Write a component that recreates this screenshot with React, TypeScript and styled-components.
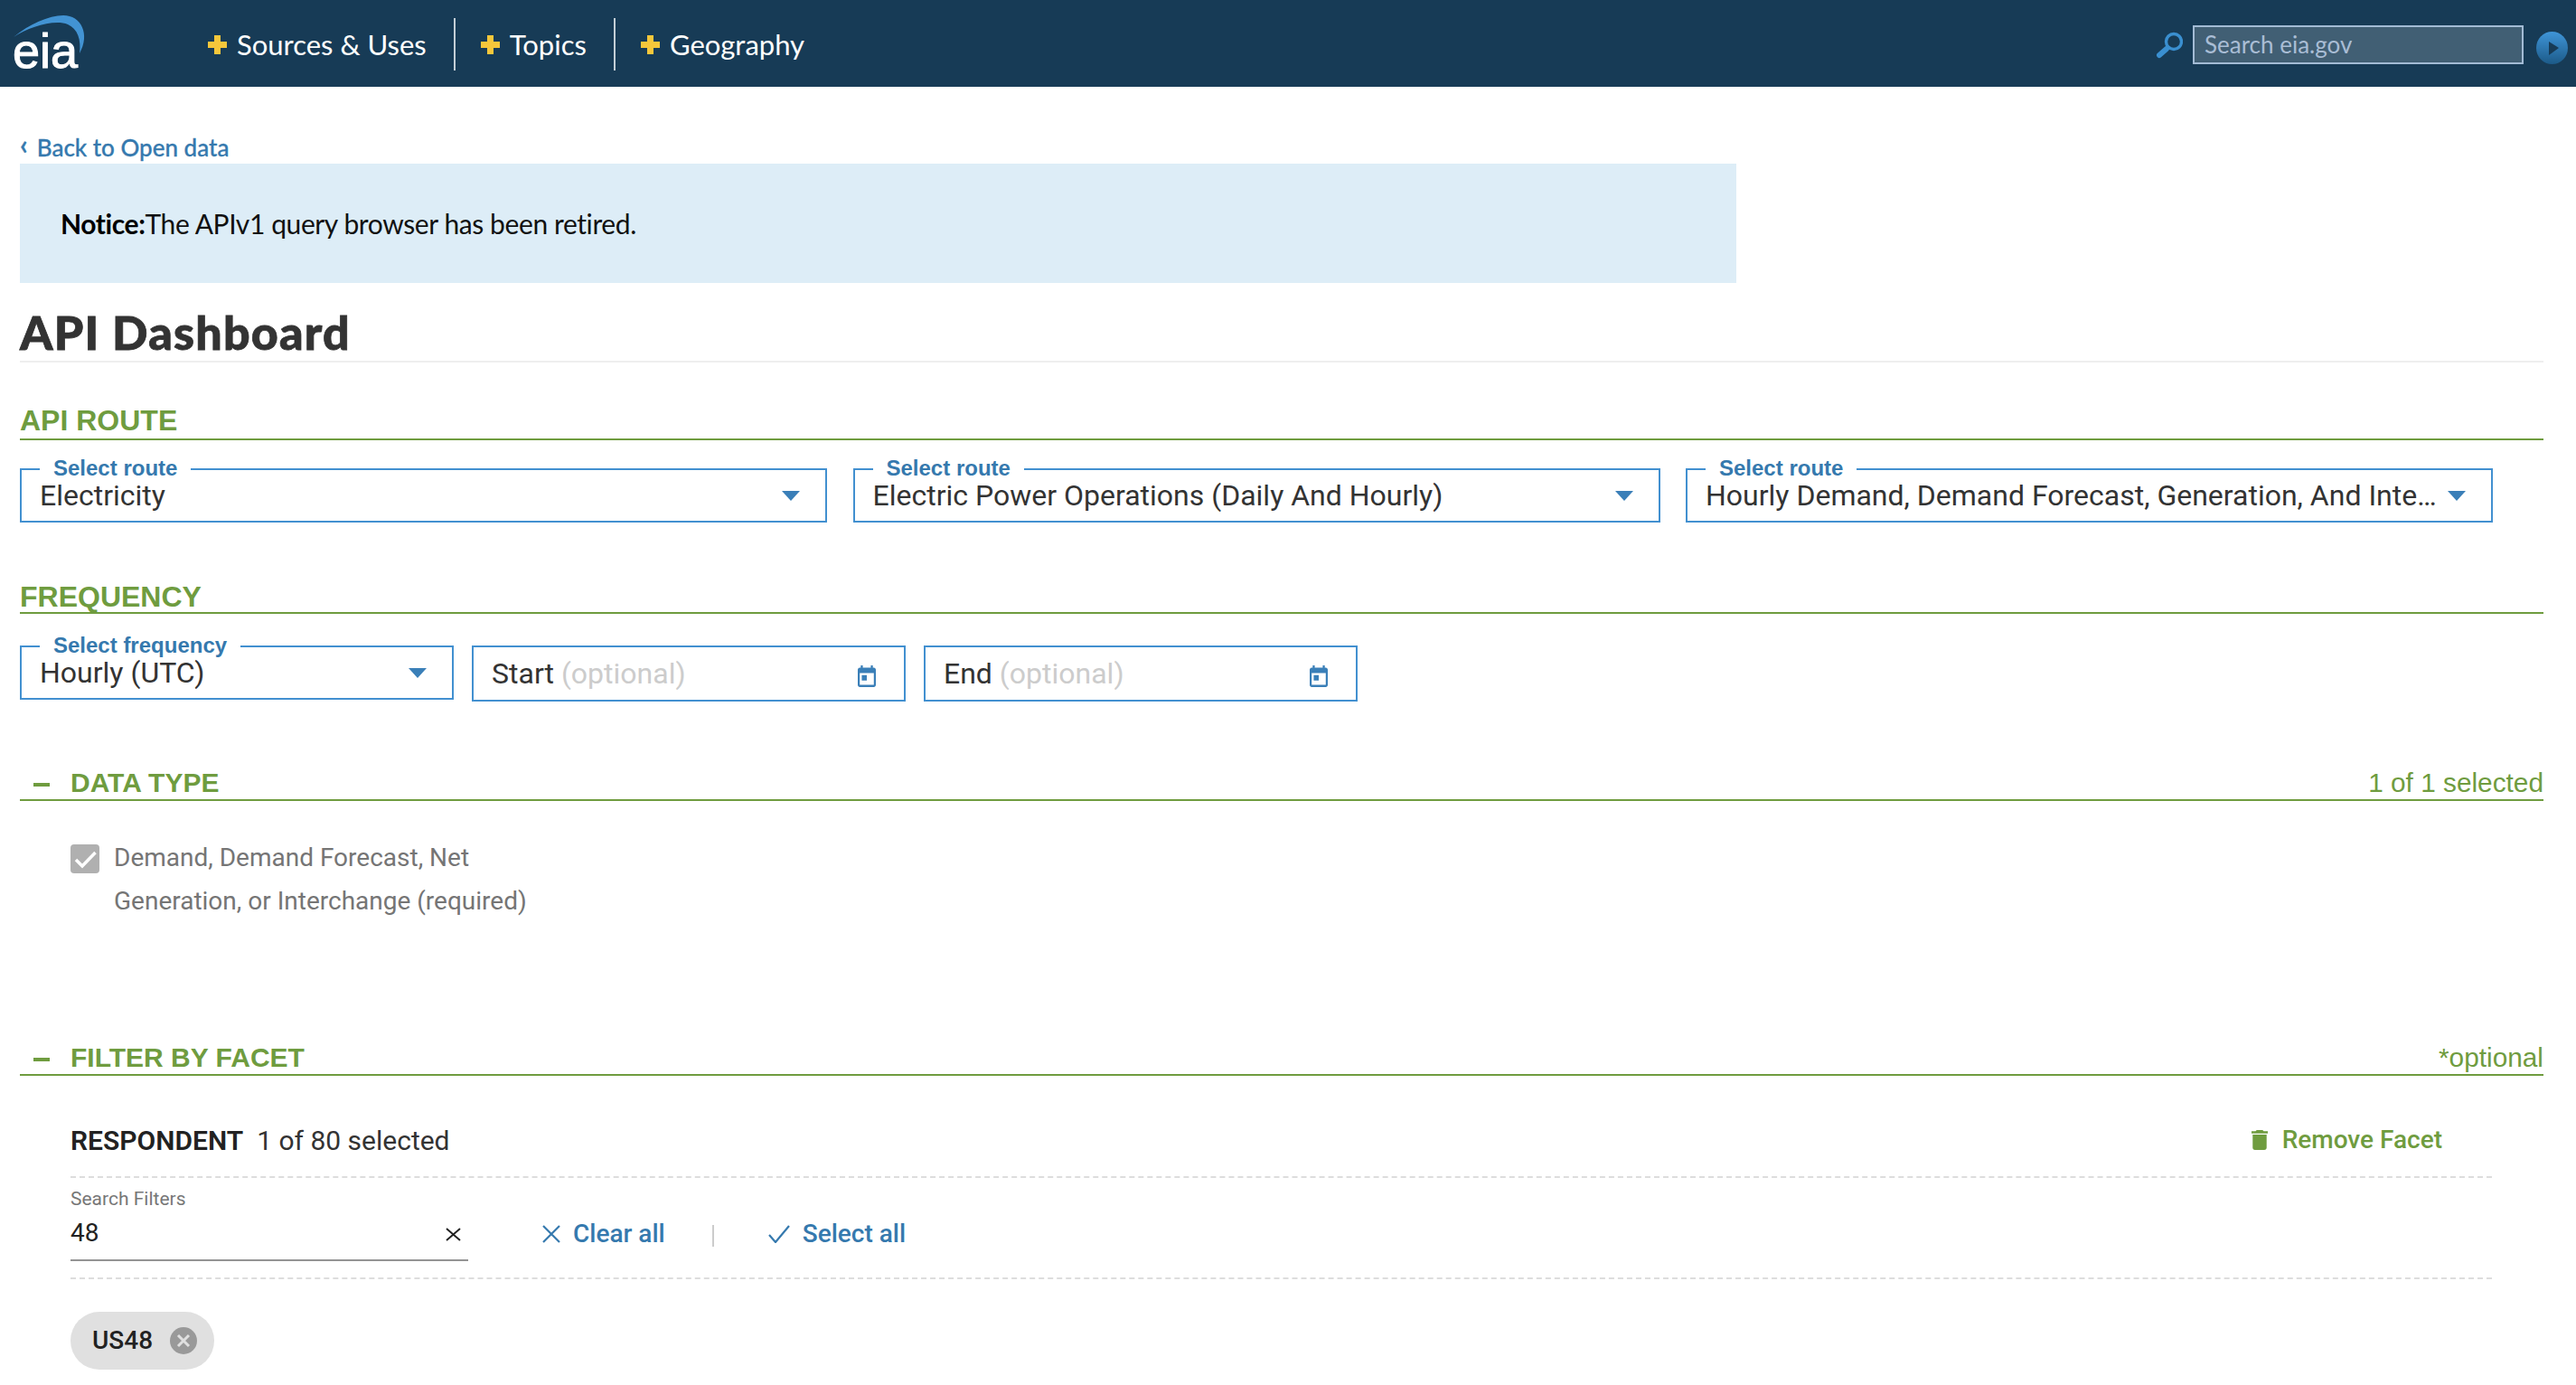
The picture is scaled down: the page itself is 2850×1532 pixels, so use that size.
import React from "react";
import styled, { createGlobalStyle } from "styled-components";

const Global = createGlobalStyle`
  html, body { margin: 0; padding: 0; background: #fff; }
  body { width: 2850px; height: 1532px; overflow: hidden; font-family: Roboto, sans-serif; color: #333; }
  * { box-sizing: border-box; }
`;

const GREEN = "#6f9c3f";
const BLUE = "#4290d0";
const LINK = "#3579ae";
const FUTURA = `Lato, "Noto Sans", sans-serif`;
const ARIAL = `"Liberation Sans", Arial, sans-serif`;

const Header = styled.header`
  display: flex; align-items: center; height: 96px; background: #173b56; padding: 0 9px 0 12px;
`;
const LogoWrap = styled.div`
  position: relative; width: 92px; height: 96px; flex: none;
`;
const LogoArc = styled.svg`
  position: absolute; left: 0; top: 0;
`;
const LogoText = styled.span`
  position: absolute; left: 2px; top: 28px; font: 400 54px/56px ${ARIAL}; color: #fff; -webkit-text-stroke: 1px #fff;
`;
const Nav = styled.nav`
  display: flex; align-items: center; margin: 2px 0 0 126px; height: 58px;
`;
const NavItem = styled.a<{ $last?: boolean }>`
  display: flex; align-items: center; gap: 11px; height: 58px;
  padding: 0 30px 0 28px; font: 400 31px/1 ${FUTURA}; color: #fff;
  border-right: ${p => (p.$last ? "none" : "2px solid #c3ced6")};
  &:first-child { padding-left: 0; }
`;
const Plus = styled.svg`
  flex: none; width: 21px; height: 21px;
`;
const SearchArea = styled.div`
  margin: 3px 0 0 auto; display: flex; align-items: center;
`;
const SearchBox = styled.div`
  width: 366px; height: 43px; margin-left: 11px; border: 2px solid #a3bbd5; background: #415f74;
  color: #a9bdd5; font: 400 26px/39px ${FUTURA}; padding: 0 0 0 11px;
`;
const PlayBtn = styled.svg`
  margin: 7px 0 0 14px; width: 35px; height: 36px; flex: none;
`;

const Main = styled.main`
  padding: 49px 36px 0 22px;
`;
const BackLink = styled.a`
  display: flex; align-items: center; gap: 10px; height: 36px; color: ${LINK}; font: 500 26px/31px ${FUTURA};
  -webkit-text-stroke: 0.3px ${LINK};
`;
const Chevron = styled.span`
  font: 700 30px/20px ${FUTURA}; margin-top: -8px;
`;
const Notice = styled.div`
  width: 1899px; height: 132px; background: #ddedf7; padding: 0 45px; display: flex; align-items: center;
  font: 400 30px/1 ${FUTURA}; letter-spacing: -0.4px; color: #111;
  strong { font-weight: 700; color: #000; }
`;
const Title = styled.h1`
  margin: 24px 0 0; height: 64px; font: 900 52px/60px ${FUTURA}; letter-spacing: 1.2px; color: #333;
  -webkit-text-stroke: 0.8px #333; border-bottom: 2px solid #eee;
`;
const SectionTitle = styled.h2<{ $top: number; $lh: number }>`
  margin: ${p => p.$top}px 0 0; font: 700 32px/${p => p.$lh}px ${ARIAL}; color: ${GREEN}; border-bottom: 2px solid ${GREEN}; height: 43px;
`;
const CollapseHead = styled.div<{ $top: number }>`
  display: flex; align-items: flex-end; justify-content: space-between; margin-top: ${p => p.$top}px; height: 38px;
  border-bottom: 2px solid ${GREEN}; font-family: ${ARIAL}; color: ${GREEN}; padding-left: 15px;
`;
const Minus = styled.span`
  width: 18px; height: 4px; background: ${GREEN}; margin-bottom: 14px; flex: none;
`;
const CollapseTitle = styled.span`
  margin-left: 23px; margin-right: auto; font: 700 30px/36px ${ARIAL};
`;
const CollapseNote = styled.span`
  font: 400 29.8px/36px ${ARIAL};
`;
const RouteRow = styled.div`
  display: flex; gap: 28.5px; align-items: flex-end; margin-top: 20px;
`;
const Field = styled.fieldset<{ $w: number }>`
  position: relative; margin: 0; padding: 0 52px 0 20px; width: ${p => p.$w}px; min-width: 0; height: 71px; border: 2px solid ${BLUE}; flex: none;
`;
const Legend = styled.legend`
  margin-left: 0; padding: 0 15px 2px; font: 700 24px/22px ${ARIAL}; color: ${LINK};
`;
const FieldValue = styled.div`
  font: 400 32px/38px Roboto, sans-serif; color: #333; white-space: nowrap; overflow: hidden; text-overflow: ellipsis;
  margin-top: -2px;
`;
const Caret = styled.span`
  position: absolute; right: 28px; top: 12px; width: 0; height: 0;
  border-left: 10px solid transparent; border-right: 10px solid transparent; border-top: 11px solid #3a7fb8;
`;
const FreqRow = styled.div`
  display: flex; gap: 20px; align-items: flex-end; margin-top: 24px;
`;
const DateBox = styled.div`
  display: flex; align-items: center; justify-content: space-between; width: 480px; height: 62px; margin-bottom: -2px;
  border: 2px solid ${BLUE}; padding: 0 31px 0 20px; font: 400 32px/1 Roboto, sans-serif; color: #333;
  em { font-style: normal; color: #ccc; }
`;
const CalIcon = styled.svg`
  width: 20px; height: 24px; flex: none; fill: #3a7fb8; margin-top: 6px;
`;
const CheckRow = styled.div`
  display: flex; gap: 16px; margin: 48px 0 0 56px; width: 530px;
`;
const Checkbox = styled.span`
  flex: none; width: 32px; height: 32px; border-radius: 4px; background: #b0b0b0; display: flex;
`;
const CheckLabel = styled.span`
  font: 400 28px/48px Roboto, sans-serif; color: #757575; margin-top: -9px;
`;
const FacetBody = styled.div`
  margin: 0 57px 0 56px;
`;
const FacetHead = styled.div`
  display: flex; align-items: baseline; justify-content: space-between; height: 113px; padding: 53px 55px 0 0;
  border-bottom: 2px dashed #ddd;
`;
const FacetName = styled.div`
  font: 400 30px/36px Roboto, sans-serif; color: #333;
  strong { font-weight: 600; color: #222; margin-right: 15px; }
`;
const RemoveBtn = styled.a`
  display: flex; align-items: center; gap: 16px; font: 500 28px/36px Roboto, sans-serif; color: ${GREEN};
`;
const TrashIcon = styled.svg`
  width: 18px; height: 22px; fill: ${GREEN};
`;
const SearchRow = styled.div`
  display: flex; align-items: flex-end; height: 112px; border-bottom: 2px dashed #ddd; padding-bottom: 18px;
`;
const SearchField = styled.div`
  width: 440px;
`;
const SearchLabel = styled.div`
  font: 400 21px/26px Roboto, sans-serif; color: #777;
`;
const SearchInput = styled.div`
  display: flex; align-items: center; justify-content: space-between; height: 51px; border-bottom: 2px solid #949494;
  font: 400 28px/36px Roboto, sans-serif; color: #222; padding: 0 8px 10px 0; margin-top: 5px;
`;
const ClearMark = styled.svg`
  width: 17px; height: 15px; margin-top: 4px; flex: none;
`;
const ActionLink = styled.a<{ $ml: number }>`
  display: flex; align-items: center; gap: 14px; margin-left: ${p => p.$ml}px; height: 36px; margin-bottom: 12px;
  font: 500 28px/36px Roboto, sans-serif; color: ${LINK};
`;
const Pipe = styled.span`
  width: 2px; height: 24px; background: #ccc; margin: 0 0 16px 52px;
`;
const Chip = styled.div`
  display: inline-flex; align-items: center; gap: 19px; height: 64px; margin-top: 36px; padding: 0 19px 0 24px;
  background: #e0e0e0; border-radius: 32px; font: 500 28px/1 Roboto, sans-serif; color: #222;
`;
const ChipClose = styled.svg`
  width: 30px; height: 30px; flex: none;
`;

const Select = ({ label, value, w }: { label: string; value: string; w: number }) => (
  <Field $w={w}>
    <Legend>{label}</Legend>
    <FieldValue>{value}</FieldValue>
    <Caret />
  </Field>
);

const Cal = () => (
  <CalIcon viewBox="3 1 18 20" preserveAspectRatio="none">
    <path d="M19 3h-1V1h-2v2H8V1H6v2H5c-1.11 0-1.99.9-1.99 2L3 19c0 1.1.89 2 2 2h14c1.1 0 2-.9 2-2V5c0-1.1-.9-2-2-2zm0 16H5V8h14v11zM7 10h5v5H7z" />
  </CalIcon>
);

const PlusMark = () => (
  <Plus viewBox="0 0 21 21"><path d="M7 0h7v7h7v7h-7v7H7v-7H0V7h7z" fill="#f6c73b" /></Plus>
);

export default function App() {
  return (
    <>
      <Global />
      <Header>
        <LogoWrap>
          <LogoArc width="92" height="96" viewBox="0 0 92 96">
            <path d="M3 41C20 27 42 17 58 17C78 17 88 38 76 59C78 44 74 32 63 27C48 21 20 30 3 41Z" fill="#4293d3" />
          </LogoArc>
          <LogoText>eia</LogoText>
        </LogoWrap>
        <Nav>
          <NavItem><PlusMark />Sources &amp; Uses</NavItem>
          <NavItem><PlusMark />Topics</NavItem>
          <NavItem $last><PlusMark />Geography</NavItem>
        </Nav>
        <SearchArea>
          <svg width="30" height="30" viewBox="0 0 30 30">
            <circle cx="20" cy="11" r="8.5" fill="none" stroke="#3a8fd0" strokeWidth="3.4" />
            <path d="M12 19L4 26" stroke="#3a8fd0" strokeWidth="6" strokeLinecap="round" />
          </svg>
          <SearchBox>Search eia.gov</SearchBox>
          <PlayBtn viewBox="0 0 35 36">
            <defs>
              <linearGradient id="playG" x1="0" y1="0" x2="0" y2="1">
                <stop offset="0" stopColor="#3f95d8" />
                <stop offset="1" stopColor="#1c5a88" />
              </linearGradient>
            </defs>
            <ellipse cx="17.5" cy="18" rx="17.5" ry="18" fill="url(#playG)" />
            <path d="M14 11l11 7-11 8z" fill="#173b56" />
          </PlayBtn>
        </SearchArea>
      </Header>
      <Main>
        <BackLink><Chevron>‹</Chevron>Back to Open data</BackLink>
        <Notice><span><strong>Notice:</strong>The APIv1 query browser has been retired.</span></Notice>
        <Title>API Dashboard</Title>
        <SectionTitle $top={43} $lh={43}>API ROUTE</SectionTitle>
        <RouteRow>
          <Select label="Select route" value="Electricity" w={893} />
          <Select label="Select route" value="Electric Power Operations (Daily And Hourly)" w={893} />
          <Select label="Select route" value="Hourly Demand, Demand Forecast, Generation, And Interchange" w={893} />
        </RouteRow>
        <SectionTitle $top={58} $lh={48}>FREQUENCY</SectionTitle>
        <FreqRow>
          <Select label="Select frequency" value="Hourly (UTC)" w={480} />
          <DateBox><span>Start <em>(optional)</em></span><Cal /></DateBox>
          <DateBox><span>End <em>(optional)</em></span><Cal /></DateBox>
        </FreqRow>
        <CollapseHead $top={74}>
          <Minus />
          <CollapseTitle>DATA TYPE</CollapseTitle>
          <CollapseNote>1 of 1 selected</CollapseNote>
        </CollapseHead>
        <CheckRow>
          <Checkbox>
            <svg width="32" height="32" viewBox="0 0 32 32"><path d="M6 17L13 24L27.5 9" fill="none" stroke="#fff" strokeWidth="3.5" /></svg>
          </Checkbox>
          <CheckLabel>Demand, Demand Forecast, Net Generation, or Interchange (required)</CheckLabel>
        </CheckRow>
        <CollapseHead $top={131}>
          <Minus />
          <CollapseTitle>FILTER BY FACET</CollapseTitle>
          <CollapseNote>*optional</CollapseNote>
        </CollapseHead>
        <FacetBody>
          <FacetHead>
            <FacetName><strong>RESPONDENT</strong>1 of 80 selected</FacetName>
            <RemoveBtn>
              <TrashIcon viewBox="5 3 14 18" preserveAspectRatio="none"><path d="M6 19c0 1.1.9 2 2 2h8c1.1 0 2-.9 2-2V7H6v12zM19 4h-3.5l-1-1h-5l-1 1H5v2h14V4z" /></TrashIcon>
              Remove Facet
            </RemoveBtn>
          </FacetHead>
          <SearchRow>
            <SearchField>
              <SearchLabel>Search Filters</SearchLabel>
              <SearchInput>48
                <ClearMark viewBox="0 0 17 15"><path d="M1 1l15 13M16 1L1 14" stroke="#222" strokeWidth="2" fill="none" /></ClearMark>
              </SearchInput>
            </SearchField>
            <ActionLink $ml={82}>
              <svg width="20" height="20" viewBox="0 0 20 20"><path d="M1 1l18 18M19 1L1 19" stroke="#3579ae" strokeWidth="2.2" fill="none" /></svg>
              Clear all
            </ActionLink>
            <Pipe />
            <ActionLink $ml={60}>
              <svg width="24" height="20" viewBox="0 0 24 20"><path d="M1 11l7 8L23 1" stroke="#3579ae" strokeWidth="2.2" fill="none" /></svg>
              Select all
            </ActionLink>
          </SearchRow>
          <Chip>
            US48
            <ChipClose viewBox="0 0 30 30">
              <circle cx="15" cy="15" r="15" fill="#999" />
              <path d="M9 9l12 12M21 9L9 21" stroke="#e0e0e0" strokeWidth="3" />
            </ChipClose>
          </Chip>
        </FacetBody>
      </Main>
    </>
  );
}
